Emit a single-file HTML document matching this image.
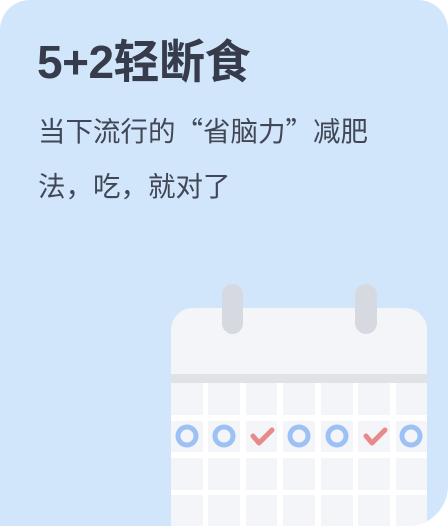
<!DOCTYPE html>
<html><head><meta charset="utf-8"><style>
html,body{margin:0;padding:0;background:#fff;}
.card{position:absolute;left:0;top:0;width:448px;height:526px;background:#d2e6fb;border-radius:30px 30px 40px 0;overflow:hidden;font-family:"Liberation Sans","Noto Sans CJK SC",sans-serif;}
h1{position:absolute;left:37px;top:33px;margin:0;font-size:46px;font-weight:bold;color:#363c4b;line-height:58px;letter-spacing:-0.5px;}
p{position:absolute;left:38px;top:102px;margin:0;font-family:"Noto Sans CJK SC",sans-serif;font-size:27.5px;color:#414756;line-height:55px;width:380px;}
</style></head><body>
<div class="card">
<h1>5+2轻断食</h1>
<p>当下流行的“省脑力”减肥<br>法，吃，就对了</p>
<svg style="position:absolute;left:0;top:0" width="448" height="526">
<path d="M171 330 a22 22 0 0 1 22 -22 h212 a22 22 0 0 1 22 22 V526 H171Z" fill="#f3f5f9"/>
<rect x="171" y="374" width="256" height="9" fill="#dfe2e7"/>
<g fill="#fff">
<rect x="203" y="383" width="5" height="143"/><rect x="240" y="383" width="6" height="143"/>
<rect x="277" y="383" width="6" height="143"/><rect x="315" y="383" width="6" height="143"/>
<rect x="353" y="383" width="5" height="143"/><rect x="390" y="383" width="6" height="143"/>
<rect x="171" y="415" width="256" height="6"/><rect x="171" y="452" width="256" height="6"/>
<rect x="171" y="490" width="256" height="5"/>
</g>
<rect x="222" y="284" width="21" height="50" rx="10.5" fill="#d6d9e0"/>
<rect x="355" y="284" width="22" height="50" rx="11" fill="#d6d9e0"/>
<g fill="none" stroke="#9dc1f5" stroke-width="5">
<circle cx="187" cy="436" r="9"/><circle cx="224" cy="436" r="9"/>
<circle cx="299" cy="436" r="9"/><circle cx="337" cy="436" r="9"/><circle cx="411" cy="436" r="9"/>
</g>
<g fill="none" stroke="#e88a8a" stroke-width="5" stroke-linecap="round" stroke-linejoin="round">
<path d="M253 436 l6 7 l13 -13"/><path d="M366 436 l6 7 l13 -13"/>
</g>
</svg>
</div>
</body></html>
